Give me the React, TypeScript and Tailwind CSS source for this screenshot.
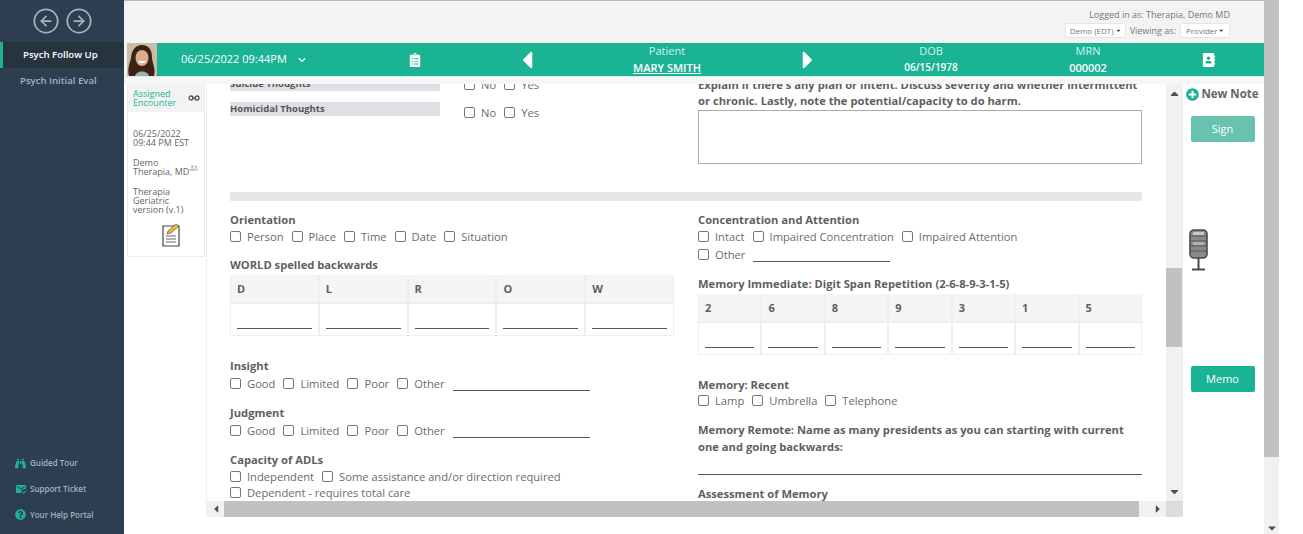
import { CircleArrowLeft, CircleArrowRight } from "lucide-react";
import { FaAddressBook, FaBinoculars, FaCaretDown, FaCaretLeft, FaCaretRight, FaCaretUp, FaChevronDown, FaClipboardList, FaPlusCircle, FaQuestionCircle, FaUserFriends } from "react-icons/fa";
import { MdMarkEmailRead } from "react-icons/md";

const Check = ({ label, className = "" }: { label: string; className?: string }) => (
    <span className={`flex items-center ${className}`}>
        <span className="w-[11px] h-[11px] rounded-[2px] border border-[#767676] bg-white mr-[6px]"></span>
        <span>{label}</span>
    </span>
);

const Label = ({ children, className = "" }: { children: React.ReactNode; className?: string }) => (
    <div className={`font-bold text-[11.2px] leading-[16px] text-[#5f5f5f] ${className}`}>{children}</div>
);

const CheckRow = ({ items, line, className = "" }: { items: string[]; line?: string; className?: string }) => (
    <div className={`flex items-center gap-[8px] text-[11.2px] leading-[17px] text-[#6b6b6b] ${className}`}>
        {items.map((i) => (
            <Check key={i} label={i} />
        ))}
        {line && <span className={`${line} h-[14px] border-b border-[#555]`}></span>}
    </div>
);

const LetterTable = ({ letters }: { letters: string[] }) => (
    <div className="flex border-b border-[#eee] text-[11px] font-bold text-[#5f5f5f]">
        {letters.map((l) => (
            <div key={l} className="flex-1 border-l border-r border-[#eee]">
                <div className="h-[29px] bg-[#f5f5f5] border-b-2 border-[#eee] pl-[6px] leading-[27px]">{l}</div>
                <div className="h-[31px] px-[6px] pt-[24px]">
                    <div className="border-b border-[#555]"></div>
                </div>
            </div>
        ))}
    </div>
);

const Mic = () => (
    <svg width="20" height="42" viewBox="0 0 20 42">
        <rect x="1" y="1" width="17" height="28" rx="4" fill="#8a8a8a" stroke="#4a4a4a" strokeWidth="1.6" />
        <path d="M2 7h15M2 12h15M2 17h15M2 22h15" stroke="#555" strokeWidth="1.2" />
        <rect x="4" y="3" width="11" height="3" fill="#c8c8c8" />
        <rect x="4" y="13" width="11" height="3" fill="#b0b0b0" />
        <path d="M9.5 29v11M3 40.500h13" stroke="#4a4a4a" strokeWidth="2" />
    </svg>
);

const NoteIcon = () => (
    <svg width="18" height="24" viewBox="0 0 18 24">
        <path d="M1 3h16v20H1z" fill="#fff" stroke="#444" strokeWidth="1.200" />
        <path d="M4 13h10M4 16h10M4 19h10" stroke="#666" strokeWidth="1" />
        <path d="M5 11l1-3 8-7 3 2-8 7z" fill="#f2b632" stroke="#555" strokeWidth=".7" />
    </svg>
);

const Avatar = () => (
    <svg width="30" height="33" viewBox="0 0 30 33" className="shrink-0">
        <rect width="30" height="33" fill="#c9bda8" />
        <path d="M2 33C0 25 3 20 4 15 5 5 10 2 15 2c6 0 10 4 10 12 0 6 4 11 2 19z" fill="#3b2417" />
        <ellipse cx="15" cy="15" rx="6.500" ry="8" fill="#dcae90" />
        <path d="M11 18c2 3 6 3 8 0z" fill="#fff" />
        <path d="M8 33c1-6 13-6 14 0z" fill="#9db3a0" />
    </svg>
);

const App = () => {
    return (
        <div className="w-[1303px] h-[534px] flex overflow-hidden bg-white font-['Open_Sans',sans-serif] text-[#666]">
            {/* left nav */}
            <aside className="w-[124px] shrink-0 bg-[#2c3e50] flex flex-col">
                <div className="h-[42px] flex items-center justify-center gap-[5px] text-[#a9b3bd]">
                    <CircleArrowLeft size={28} strokeWidth={1.500} />
                    <CircleArrowRight size={28} strokeWidth={1.500} />
                </div>
                <div className="h-[26px] bg-[#27343f] border-l-[3px] border-[#1ab394] text-white text-[9.600px] font-semibold flex items-center pl-[20px]">
                    Psych Follow Up
                </div>
                <div className="h-[26px] text-[#a7b1c2] text-[9.600px] font-semibold flex items-center pl-[20px]">
                    Psych Initial Eval
                </div>
                <div className="mt-auto pb-[7px] text-[#a7b1c2] text-[8px] font-semibold">
                    <div className="h-[26px] flex items-center pl-[15px] gap-[4px]">
                        <FaBinoculars size={11} className="text-[#1ab394]" />Guided Tour
                    </div>
                    <div className="h-[26px] flex items-center pl-[15px] gap-[3px]">
                        <MdMarkEmailRead size={12} className="text-[#1ab394]" />Support Ticket
                    </div>
                    <div className="h-[25px] flex items-center pl-[15px] gap-[4px]">
                        <FaQuestionCircle size={11} className="text-[#1ab394]" />Your Help Portal
                    </div>
                </div>
            </aside>

            <div className="w-[1140px] shrink-0 flex flex-col">
                {/* top strip */}
                <div className="h-[43px] bg-[#f3f3f3] border-t border-[#bbb] flex flex-col items-end pr-[34px] pt-[7px] text-[9px] text-[#777]">
                    <div className="leading-[13px]">Logged in as: Therapia, Demo MD</div>
                    <div className="flex items-center gap-[4px] mt-[2px] leading-[13px]">
                        <span className="w-[61px] h-[15px] bg-white border border-[#e5e5e5] rounded-[2px] pl-[4px] pr-[3px] flex items-center justify-between whitespace-nowrap text-[8px]">
                            Demo (EDT) <FaCaretDown size={7} className="text-[#444]" />
                        </span>
                        <span>Viewing as:</span>
                        <span className="w-[50px] h-[15px] bg-white border border-[#e5e5e5] rounded-[2px] px-[5px] flex items-center justify-between whitespace-nowrap text-[8px]">
                            Provider <FaCaretDown size={7} className="text-[#444]" />
                        </span>
                    </div>
                </div>

                {/* teal patient bar */}
                <div className="h-[33px] flex bg-[#f3f3f3] pl-[3px]">
                    <Avatar />
                    <div className="flex-1 flex bg-[#1ab394] text-white">
                        <div className="w-[243px] flex items-center gap-[11px] text-[11px] pl-[24px]">
                            06/25/2022 09:44PM <FaChevronDown size={8} />
                        </div>
                        <div className="w-[30px] flex items-center justify-center"><FaClipboardList size={14} /></div>
                        <div className="w-[70px] flex items-center justify-center ml-[62px]"><FaCaretLeft size={28} /></div>
                        <div className="w-[140px] ml-[35px] text-center">
                            <div className="text-[11px] leading-[14px] pt-[1px] text-[#d5f2ec]">Patient</div>
                            <div className="text-[11px] leading-[15px] pt-[2px] font-semibold underline">MARY SMITH</div>
                        </div>
                        <div className="w-[70px] flex items-center justify-center ml-[36px]"><FaCaretRight size={28} /></div>
                        <div className="w-[100px] ml-[38px] text-center">
                            <div className="text-[11px] leading-[14px] pt-[1px] text-[#d5f2ec]">DOB</div>
                            <div className="text-[10px] leading-[15px] pt-[2px] font-semibold">06/15/1978</div>
                        </div>
                        <div className="w-[60px] ml-[77px] text-center">
                            <div className="text-[11px] leading-[14px] pt-[1px] text-[#d5f2ec]">MRN</div>
                            <div className="text-[11px] leading-[15px] pt-[2px] font-semibold">000002</div>
                        </div>
                        <div className="flex-1 flex items-center justify-center pl-[36px]"><FaAddressBook size={14} /></div>
                    </div>
                </div>

                <div className="h-[8px] bg-[#f6f6f6] border-t border-[#d7efe9]"></div>

                <div className="flex-1 min-h-0 flex items-start">
                    {/* encounter card */}
                    <div className="w-[82px] shrink-0 pl-[3px] pr-[1px]">
                        <div className="h-[173px] border border-[#eee] border-t-0 bg-white text-[9px] leading-[9px] text-[#666]">
                            <div className="h-[28px] bg-[#f3f3f3] pl-[5px] pt-[5px] flex items-start text-[#1ab394]">
                                <span>Assigned<br />Encounter</span>
                                <svg width="12" height="6" viewBox="0 0 12 6" className="ml-auto mr-[4px] mt-[6px]" fill="none" stroke="#555" strokeWidth="1.300">
                                    <circle cx="3" cy="3" r="2" /><circle cx="9" cy="3" r="2" /><path d="M4 3h4" />
                                </svg>
                            </div>
                            <div className="pl-[5px] pt-[17px]">06/25/2022<br />09:44 PM EST</div>
                            <div className="pl-[5px] pt-[11px]">
                                Demo<br />
                                <span className="inline-flex items-start">
                                    Therapia, MD<FaUserFriends size={8} className="text-[#bbb] ml-[1px] -mt-[3px]" />
                                </span>
                            </div>
                            <div className="pl-[5px] pt-[11px]">Therapia<br />Geriatric<br />version (v.1)</div>
                            <div className="flex justify-center pl-[10px] pt-[9px]"><NoteIcon /></div>
                        </div>
                    </div>

                    {/* form */}
                    <div className="w-[977px] h-[433px] shrink-0 border-l border-[#eee] flex flex-col">
                        <div className="flex-1 min-h-0 flex">
                            <div className="w-[959px] overflow-hidden pl-[23px]">
                                <div className="w-[912px] -mt-[7px]">
                                    <div className="grid grid-cols-2 gap-[24px] h-[108px]">
                                        <div className="text-[#555]">
                                            <div className="flex items-center h-[14px]">
                                                <div className="w-[210px] bg-[#dfe0e5] font-bold text-[9.500px] leading-[14px]">Suicide Thoughts</div>
                                                <CheckRow items={["No", "Yes"]} className="ml-[24px]" />
                                            </div>
                                            <div className="flex items-center h-[14px] mt-[11px]">
                                                <div className="w-[210px] bg-[#dfe0e5] font-bold text-[9.500px] leading-[14px]">Homicidal Thoughts</div>
                                                <CheckRow items={["No", "Yes"]} className="ml-[24px] pt-[7px]" />
                                            </div>
                                        </div>
                                        <div>
                                            <Label>
                                                Explain if there's any plan or intent. Discuss severity and whether intermittent or chronic. Lastly, note the potential/capacity to do harm.
                                            </Label>
                                            <div className="h-[54px] mt-[1px] border border-[#aaa] bg-white"></div>
                                        </div>
                                    </div>
                                    <div className="h-[9px] mt-[7px] bg-[#e7e7e7]"></div>
                                    <div className="grid grid-cols-2 gap-[24px] pt-[11px]">
                                        <div>
                                            <Label>Orientation</Label>
                                            <CheckRow items={["Person", "Place", "Time", "Date", "Situation"]} />
                                            <Label className="mt-[12px] mb-[2px]">WORLD spelled backwards</Label>
                                            <LetterTable letters={["D", "L", "R", "O", "W"]} />
                                            <Label className="mt-[22px]">Insight</Label>
                                            <CheckRow items={["Good", "Limited", "Poor", "Other"]} line="w-[137px]" className="mt-[1px]" />
                                            <Label className="mt-[13px]">Judgment</Label>
                                            <CheckRow items={["Good", "Limited", "Poor", "Other"]} line="w-[137px]" className="mt-[1px]" />
                                            <Label className="mt-[13px]">Capacity of ADLs</Label>
                                            <CheckRow items={["Independent", "Some assistance and/or direction required"]} />
                                            <CheckRow items={["Dependent - requires total care"]} className="-mt-[1px]" />
                                        </div>
                                        <div>
                                            <Label>Concentration and Attention</Label>
                                            <CheckRow items={["Intact", "Impaired Concentration", "Impaired Attention"]} />
                                            <CheckRow items={["Other"]} line="w-[137px]" className="mt-[1px]" />
                                            <Label className="mt-[13px] mb-[2px]">Memory Immediate: Digit Span Repetition (2-6-8-9-3-1-5)</Label>
                                            <LetterTable letters={["2", "6", "8", "9", "3", "1", "5"]} />
                                            <Label className="mt-[22px]">Memory: Recent</Label>
                                            <CheckRow items={["Lamp", "Umbrella", "Telephone"]} className="-mt-[1px]" />
                                            <Label className="mt-[12px] leading-[17px]">
                                                Memory Remote: Name as many presidents as you can starting with current one and going backwards:
                                            </Label>
                                            <div className="mt-[19px] border-b border-[#555]"></div>
                                            <Label className="mt-[11px]">Assessment of Memory</Label>
                                        </div>
                                    </div>
                                </div>
                            </div>
                            {/* inner vertical scrollbar */}
                            <div className="w-[17px] shrink-0 bg-[#f1f1f1] border-r border-[#eee] flex flex-col items-center text-[#505050]">
                                <FaCaretUp size={13} className="mt-[3px]" />
                                <div className="w-[16px] h-[79px] bg-[#c1c1c1] mt-[168px]"></div>
                                <FaCaretDown size={13} className="mt-auto mb-[3px]" />
                            </div>
                        </div>
                        {/* inner horizontal scrollbar */}
                        <div className="h-[16px] shrink-0 bg-[#f1f1f1] flex items-center text-[#505050]">
                            <FaCaretLeft size={12} className="ml-[3px]" />
                            <div className="h-[16px] w-[915px] ml-[2px] bg-[#c1c1c1]"></div>
                            <FaCaretRight size={12} className="ml-[13px]" />
                            <div className="ml-auto h-[16px] w-[17px] bg-[#dcdcdc]"></div>
                        </div>
                    </div>

                    {/* right actions */}
                    <div className="flex-1 flex flex-col items-center pr-[2px]">
                        <div className="text-[11.500px] font-bold text-[#666] flex items-center gap-[2px] h-[20px]">
                            <FaPlusCircle size={13} className="text-[#1ab394]" />New Note
                        </div>
                        <div className="mt-[12px] w-[64px] h-[26px] bg-[#67c2ae] rounded-[2px] text-white text-[11px] flex items-center justify-center">Sign</div>
                        <div className="mt-[87px] mr-[47px]"><Mic /></div>
                        <div className="mt-[95px] w-[64px] h-[26px] bg-[#1ab394] rounded-[2px] text-white text-[11px] flex items-center justify-center">Memo</div>
                    </div>
                </div>
            </div>

            {/* page scrollbar */}
            <div className="w-[15px] shrink-0 bg-[#f1f1f1] flex flex-col items-center">
                <div className="w-full h-[457px] bg-[#c1c1c1]"></div>
                <FaCaretDown size={12} className="mt-auto text-[#505050]" />
            </div>
        </div>
    );
};

export default App;
